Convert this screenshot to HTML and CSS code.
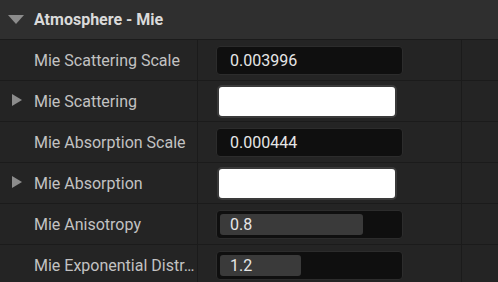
FILE: index.html
```html
<!DOCTYPE html>
<html>
<head>
<meta charset="utf-8">
<link rel="stylesheet" href="styles.css">
</head>
<body>
<div class="panel">
  <div class="header">
    <span class="caret-down"></span>
    <span class="header-title">Atmosphere - Mie</span>
  </div>
  <div class="row">
    <div class="label"><span class="name">Mie Scattering Scale</span></div>
    <div class="value"><div class="numbox"><span class="num">0.003996</span></div></div>
    <div class="extra"></div>
  </div>
  <div class="row">
    <div class="label"><span class="caret-right"></span><span class="name">Mie Scattering</span></div>
    <div class="value"><div class="swatch"></div></div>
    <div class="extra"></div>
  </div>
  <div class="row">
    <div class="label"><span class="name">Mie Absorption Scale</span></div>
    <div class="value"><div class="numbox"><span class="num">0.000444</span></div></div>
    <div class="extra"></div>
  </div>
  <div class="row">
    <div class="label"><span class="caret-right"></span><span class="name">Mie Absorption</span></div>
    <div class="value"><div class="swatch"></div></div>
    <div class="extra"></div>
  </div>
  <div class="row">
    <div class="label"><span class="name">Mie Anisotropy</span></div>
    <div class="value"><div class="numbox slider"><div class="fill" style="width: 143px"></div><span class="num">0.8</span></div></div>
    <div class="extra"></div>
  </div>
  <div class="row">
    <div class="label"><span class="name">Mie Exponential Distr…</span></div>
    <div class="value"><div class="numbox slider"><div class="fill" style="width: 81px"></div><span class="num">1.2</span></div></div>
    <div class="extra"></div>
  </div>
</div>
</body>
</html>
```
FILE: styles.css
```css
html, body {
  margin: 0;
  padding: 0;
  background: #242424;
}
body {
  width: 498px;
  height: 282px;
  overflow: hidden;
  font-family: Roboto, "Noto Sans", sans-serif;
}
.panel {
  display: flex;
  flex-direction: column;
}
.header {
  height: 39px;
  background: #2f2f2f;
  border-bottom: 1px solid #1b1b1b;
  display: flex;
  align-items: center;
}
.caret-down {
  width: 0;
  height: 0;
  margin-left: 8px;
  border-left: 8px solid transparent;
  border-right: 8px solid transparent;
  border-top: 9px solid #8c8c8c;
}
.header-title {
  margin-left: 10px;
  color: #dadada;
  font-weight: bold;
  font-size: 16px;
}
.row {
  height: 40px;
  display: flex;
  border-bottom: 1px solid #1b1b1b;
  background: #242424;
}
.label {
  width: 198px;
  border-right: 1px solid #1b1b1b;
  display: flex;
  align-items: center;
  position: relative;
  box-sizing: border-box;
  padding-left: 34px;
  padding-right: 2px;
}
.name {
  color: #c2c2c2;
  font-size: 16px;
  white-space: nowrap;
}
.caret-right {
  position: absolute;
  left: 12px;
  top: 13px;
  width: 0;
  height: 0;
  border-top: 6.5px solid transparent;
  border-bottom: 6.5px solid transparent;
  border-left: 10px solid #8c8c8c;
}
.value {
  width: 264px;
  border-right: 1px solid #1b1b1b;
  display: flex;
  align-items: center;
  padding-left: 18px;
  box-sizing: border-box;
}
.extra {
  flex: 1;
}
.numbox {
  width: 187px;
  height: 29px;
  box-sizing: border-box;
  background: #0f0f0f;
  border: 1px solid #2c2c2c;
  border-radius: 4px;
  display: flex;
  align-items: center;
  position: relative;
}
.num {
  position: relative;
  margin-left: 13px;
  color: #e6e6e6;
  font-size: 16px;
}
.fill {
  position: absolute;
  left: 3px;
  top: 3px;
  bottom: 3px;
  background: #3a3a3a;
  border-radius: 3px;
}
.swatch {
  width: 180px;
  height: 33px;
  box-sizing: border-box;
  margin-left: 1px;
  background: #ffffff;
  border: 2px solid #3a3a3a;
  border-radius: 5px;
}
```
